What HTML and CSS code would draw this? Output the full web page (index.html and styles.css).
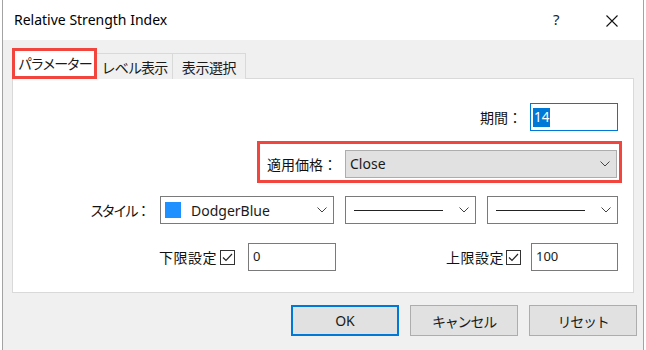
FILE: index.html
```html
<!DOCTYPE html>
<html lang="ja">
<head>
	<meta charset="UTF-8">
	<title>Relative Strength Index</title>
	<link rel="stylesheet" href="styles.css">
</head>
<body>
	<div class="window">
		<div class="titlebar">
			<span class="title">Relative Strength Index</span>
			<span class="help">?</span>
			<span class="close">
				<svg width="12" height="12" viewBox="0 0 12 12"><path d="M0.5 0.5 L11.5 11.5 M11.5 0.5 L0.5 11.5" stroke="#111" stroke-width="1.1" fill="none"/></svg>
			</span>
		</div>

		<div class="content">
			<div class="tabs">
				<div class="tab active">パラメーター</div>
				<div class="tab">レベル表示</div>
				<div class="tab">表示選択</div>
			</div>

			<div class="panel">
				<div class="row row-period">
					<span class="label">期間：</span>
					<div class="field field-focus"><span class="selected">14</span></div>
				</div>

				<div class="row">
					<div class="marked">
						<span class="label">適用価格：</span>
						<div class="combo combo-grey">
							<span class="combo-text">Close</span>
							<svg class="chev" width="10" height="6" viewBox="0 0 10 6"><path d="M0.5 0.5 L5 5 L9.5 0.5" stroke="#444" fill="none"/></svg>
						</div>
					</div>
				</div>

				<div class="row row-style">
					<span class="label">スタイル：</span>
					<div class="combo combo-color">
						<span class="swatch"></span>
						<span class="combo-text">DodgerBlue</span>
						<svg class="chev" width="10" height="6" viewBox="0 0 10 6"><path d="M0.5 0.5 L5 5 L9.5 0.5" stroke="#444" fill="none"/></svg>
					</div>
					<div class="combo combo-line">
						<span class="line"></span>
						<svg class="chev" width="10" height="6" viewBox="0 0 10 6"><path d="M0.5 0.5 L5 5 L9.5 0.5" stroke="#444" fill="none"/></svg>
					</div>
					<div class="combo combo-line">
						<span class="line"></span>
						<svg class="chev" width="10" height="6" viewBox="0 0 10 6"><path d="M0.5 0.5 L5 5 L9.5 0.5" stroke="#444" fill="none"/></svg>
					</div>
				</div>

				<div class="row row-limits">
					<div class="limit">
						<span class="label">下限設定</span>
						<span class="check">
							<svg width="15" height="15" viewBox="0 0 15 15"><rect x="0.5" y="0.5" width="14" height="14" fill="#fff" stroke="#333"/><path d="M3 7.5 L6 10.5 L12 4" stroke="#222" stroke-width="1.2" fill="none"/></svg>
						</span>
						<div class="field field-limit">0</div>
					</div>
					<div class="limit">
						<span class="label">上限設定</span>
						<span class="check">
							<svg width="15" height="15" viewBox="0 0 15 15"><rect x="0.5" y="0.5" width="14" height="14" fill="#fff" stroke="#333"/><path d="M3 7.5 L6 10.5 L12 4" stroke="#222" stroke-width="1.2" fill="none"/></svg>
						</span>
						<div class="field field-limit">100</div>
					</div>
				</div>
			</div>

			<div class="buttons">
				<button class="btn btn-default">OK</button>
				<button class="btn btn-kana">キャンセル</button>
				<button class="btn btn-kana">リセット</button>
			</div>
		</div>
	</div>
</body>
</html>
```

FILE: styles.css
```css
* {
	margin: 0;
	padding: 0;
	box-sizing: border-box;
}

body {
	font-family: "Noto Sans", "Noto Sans CJK JP", sans-serif;
	font-size: 13px;
	color: #1a1a1a;
	background: #fff;
	width: 646px;
	height: 350px;
	overflow: hidden;
}

.window {
	margin-left: 2px;
	width: 642px;
	height: 350px;
	border-left: 1px solid #a3a3a3;
	border-right: 1px solid #a3a3a3;
	background: #f0f0f0;
}

.titlebar {
	height: 40px;
	background: #fff;
	display: flex;
	align-items: center;
	padding-left: 11px;
}

.title {
	font-size: 14px;
	color: #000;
	flex: 1;
	padding-bottom: 1px;
}

.help {
	font-size: 15px;
	color: #222;
	width: 53px;
	padding-bottom: 2px;
}

.close {
	display: flex;
	width: 37px;
	padding-top: 2px;
}

.content {
	padding: 8px 6px 0 9px;
}

.tabs {
	display: flex;
	align-items: flex-end;
	height: 31px;
	margin-bottom: -1px;
}

.tab {
	height: 26px;
	border: 1px solid #d9d9d9;
	border-bottom: none;
	border-left: none;
	background: #f0f0f0;
	display: flex;
	align-items: center;
	justify-content: center;
	font-size: 14px;
	letter-spacing: -0.8px;
	white-space: nowrap;
	width: 76px;
}

.tab:last-child {
	width: 73px;
	letter-spacing: -0.4px;
}

.tab.active {
	height: 31px;
	width: 85px;
	background: #fff;
	border: 3px solid #f2453d;
	padding-bottom: 1px;
	letter-spacing: -1.8px;
	position: relative;
	z-index: 1;
}

.panel {
	width: 622px;
	height: 215px;
	background: #fff;
	border: 1px solid #d9d9d9;
	padding: 24px 15px 0 0;
}

.row {
	display: flex;
	justify-content: flex-end;
	align-items: center;
}

.label {
	white-space: nowrap;
	font-size: 14px;
	color: #111;
}

.field {
	height: 28px;
	border: 1px solid #7a7a7a;
	background: #fff;
	display: flex;
	align-items: center;
	padding-left: 4px;
	font-size: 13.5px;
}

.row-period .label {
	margin-right: 8px;
}

.field-focus {
	width: 88px;
	border-color: #0078d7;
	padding-left: 2px;
}

.selected {
	background: #0078d7;
	color: #fff;
	padding: 0 1px;
	line-height: 19px;
}

.marked {
	margin-top: 10px;
	margin-right: -4px;
	width: 365px;
	height: 42px;
	border: 3px solid #f2453d;
	display: flex;
	align-items: center;
	padding: 3px 2px 0 7px;
}

.marked .label {
	flex: 1;
}

.combo {
	height: 28px;
	border: 1px solid #7a7a7a;
	background: #fff;
	display: flex;
	align-items: center;
	padding: 0 6px 0 4px;
	font-size: 14px;
}

.combo-text {
	flex: 1;
}

.combo-grey {
	width: 272px;
	background: #e1e1e1;
	border-color: #adadad;
}

.row-style {
	margin-top: 13px;
}

.row-style .label {
	margin-right: 12px;
	letter-spacing: -2.4px;
}

.combo-color {
	width: 174px;
}

.swatch {
	width: 16px;
	height: 16px;
	background: #1e90ff;
	margin-right: 10px;
}

.combo-line {
	width: 131px;
	margin-left: 11px;
	padding-left: 8px;
}

.line {
	flex: 1;
	height: 1px;
	background: #222;
	margin-right: 16px;
}

.row-limits {
	margin-top: 19px;
	gap: 110px;
}

.limit {
	display: flex;
	align-items: center;
}

.limit .label {
	letter-spacing: 0.5px;
}

.check {
	display: flex;
	margin: 0 13px 0 3px;
}

.limit:last-child .check {
	margin: 0 10px 0 2px;
}

.field-limit {
	width: 88px;
	align-items: flex-start;
	padding-top: 3px;
	font-size: 13px;
}

.limit:last-child .field-limit {
	width: 87px;
}

.buttons {
	display: flex;
	justify-content: flex-end;
	gap: 11px;
	margin-top: 12px;
}

.btn {
	width: 108px;
	height: 31px;
	background: #e1e1e1;
	border: 1px solid #adadad;
	font-family: "Noto Sans", "Noto Sans CJK JP", sans-serif;
	font-size: 14px;
	color: #1a1a1a;
}

.btn-kana {
	letter-spacing: -1.2px;
}

.btn-default {
	border: 2px solid #0078d7;
}
```
